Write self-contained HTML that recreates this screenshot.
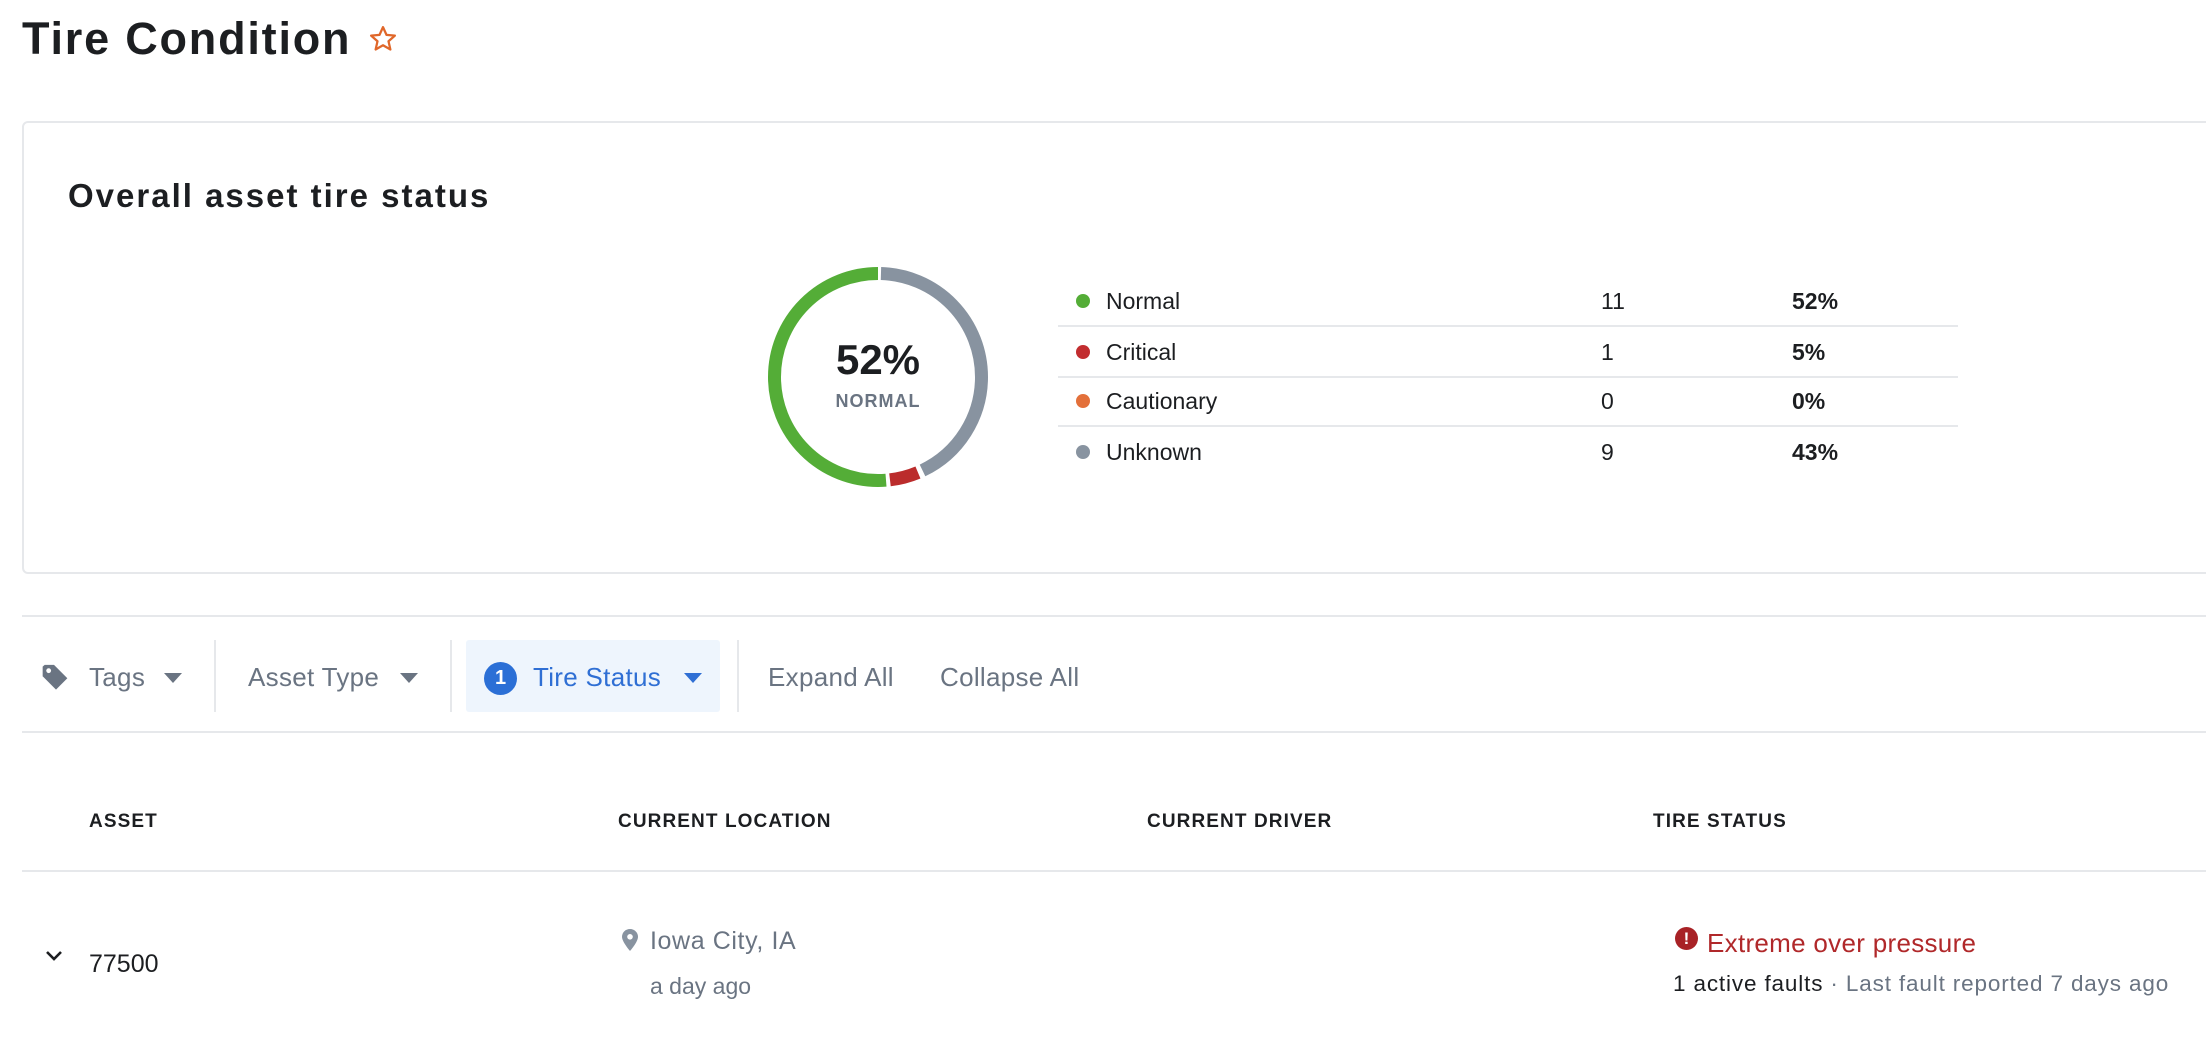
<!DOCTYPE html>
<html><head><meta charset="utf-8"><style>
*{margin:0;padding:0;box-sizing:border-box}
body{width:2206px;height:1044px;background:#fff;font-family:"Liberation Sans",sans-serif;color:#1c1e21;position:relative;overflow:hidden}
.a{position:absolute;white-space:nowrap}
.c{line-height:40px;height:40px;margin-top:-20px}
.line{position:absolute;height:2px;background:#e6e8eb}
.dot{position:absolute;width:14px;height:14px;border-radius:50%;margin-top:-7px}
.lg{font-size:23px}
.pc{font-weight:bold}
.filt{font-size:26px;color:#6a7482;letter-spacing:.3px}
.hd{font-size:19px;font-weight:bold;letter-spacing:1.1px;color:#1c1e21}
.car{position:absolute;width:0;height:0;border-left:9px solid transparent;border-right:9px solid transparent;border-top:10px solid #6a7482;margin-top:-4px}
</style></head><body>
<div class="a c" style="left:22px;top:39px;font-size:45px;font-weight:bold;line-height:40px;letter-spacing:1.8px">Tire Condition</div>
<svg class="a" style="left:368px;top:24px" width="30" height="30" viewBox="0 0 24 24"><path d="M12 2.5l2.8 6.2 6.7.6-5.1 4.5 1.5 6.6L12 17l-5.9 3.4 1.5-6.6-5.1-4.5 6.7-.6z" fill="none" stroke="#e0672a" stroke-width="1.8" stroke-linejoin="round"/></svg>

<div class="a" style="left:22px;top:121px;width:2300px;height:453px;border:2px solid #e6e8eb;border-radius:6px"></div>
<div class="a c" style="left:68px;top:196px;font-size:33px;font-weight:bold;letter-spacing:2px">Overall asset tire status</div>

<svg class="a" style="left:768px;top:267px" width="220" height="220" viewBox="0 0 220 220">
<g fill="none" stroke-width="13" transform="rotate(-90 110 110)">
<circle cx="110" cy="110" r="103.5" stroke="#8893a0" stroke-dasharray="276 1000" stroke-dashoffset="-3"/>
<circle cx="110" cy="110" r="103.5" stroke="#bb2c2c" stroke-dasharray="29 1000" stroke-dashoffset="-284"/>
<circle cx="110" cy="110" r="103.5" stroke="#54ad37" stroke-dasharray="336 1000" stroke-dashoffset="-317"/>
</g></svg>
<div class="a c" style="left:778px;width:200px;text-align:center;top:360px;font-size:42px;font-weight:bold">52%</div>
<div class="a c" style="left:778px;width:200px;text-align:center;top:401px;font-size:18px;font-weight:bold;color:#6a7482;letter-spacing:1px">NORMAL</div>

<div class="line" style="left:1058px;width:900px;top:325px"></div>
<div class="line" style="left:1058px;width:900px;top:376px"></div>
<div class="line" style="left:1058px;width:900px;top:425px"></div>
<div class="dot" style="left:1076px;top:301px;background:#54ad37"></div>
<div class="dot" style="left:1076px;top:352px;background:#c22d2f"></div>
<div class="dot" style="left:1076px;top:401px;background:#e3703a"></div>
<div class="dot" style="left:1076px;top:452px;background:#8893a0"></div>
<div class="a c lg" style="left:1106px;top:301px">Normal</div>
<div class="a c lg" style="left:1106px;top:352px">Critical</div>
<div class="a c lg" style="left:1106px;top:401px">Cautionary</div>
<div class="a c lg" style="left:1106px;top:452px">Unknown</div>
<div class="a c lg" style="left:1601px;top:301px">11</div>
<div class="a c lg" style="left:1601px;top:352px">1</div>
<div class="a c lg" style="left:1601px;top:401px">0</div>
<div class="a c lg" style="left:1601px;top:452px">9</div>
<div class="a c lg pc" style="left:1792px;top:301px">52%</div>
<div class="a c lg pc" style="left:1792px;top:352px">5%</div>
<div class="a c lg pc" style="left:1792px;top:401px">0%</div>
<div class="a c lg pc" style="left:1792px;top:452px">43%</div>

<div class="line" style="left:22px;width:2200px;top:615px"></div>
<svg class="a" style="left:40px;top:662px" width="32" height="32" viewBox="0 0 24 24"><path d="M2 3.5v7.2l10 10 8.5-8.5-10-10H3.5z" fill="#6a7482"/><circle cx="6.5" cy="6.5" r="1.8" fill="#fff"/></svg>
<div class="a c filt" style="left:89px;top:677px">Tags</div>
<div class="car" style="left:164px;top:677px"></div>
<div class="a" style="left:214px;top:640px;width:2px;height:72px;background:#e6e8eb"></div>
<div class="a c filt" style="left:248px;top:677px">Asset Type</div>
<div class="car" style="left:400px;top:677px"></div>
<div class="a" style="left:450px;top:640px;width:2px;height:72px;background:#e6e8eb"></div>
<div class="a" style="left:466px;top:640px;width:254px;height:72px;background:#eef5fd;border-radius:3px"></div>
<div class="a" style="left:484px;top:662px;width:33px;height:33px;border-radius:50%;background:#2b6fd6;color:#fff;font-size:20px;font-weight:bold;text-align:center;line-height:33px">1</div>
<div class="a c filt" style="left:533px;top:677px;color:#2f6fd4">Tire Status</div>
<div class="car" style="left:684px;top:677px;border-top-color:#2f6fd4"></div>
<div class="a" style="left:737px;top:640px;width:2px;height:72px;background:#e6e8eb"></div>
<div class="a c filt" style="left:768px;top:677px">Expand All</div>
<div class="a c filt" style="left:940px;top:677px">Collapse All</div>
<div class="line" style="left:22px;width:2200px;top:731px"></div>

<div class="a c hd" style="left:89px;top:822px">ASSET</div>
<div class="a c hd" style="left:618px;top:822px">CURRENT LOCATION</div>
<div class="a c hd" style="left:1147px;top:822px">CURRENT DRIVER</div>
<div class="a c hd" style="left:1653px;top:822px">TIRE STATUS</div>
<div class="line" style="left:22px;width:2200px;top:870px"></div>

<svg class="a" style="left:44px;top:948px" width="20" height="16" viewBox="0 0 20 16"><path d="M3 4l7 7 7-7" fill="none" stroke="#1c1e21" stroke-width="2.6"/></svg>
<div class="a c" style="left:89px;top:964px;font-size:25px">77500</div>
<svg class="a" style="left:622px;top:929px" width="16" height="22" viewBox="0 0 16 22"><path d="M8 0C3.6 0 0 3.4 0 7.8 0 13 8 22 8 22s8-9 8-14.2C16 3.4 12.4 0 8 0z" fill="#8893a0"/><circle cx="8" cy="7.8" r="2.8" fill="#fff"/></svg>
<div class="a c" style="left:650px;top:941px;font-size:25px;letter-spacing:.6px;color:#6a7482">Iowa City, IA</div>
<div class="a c" style="left:650px;top:986px;font-size:23px;color:#6a7482">a day ago</div>
<div class="a" style="left:1675px;top:927px;width:23px;height:23px;border-radius:50%;background:#a82226;color:#fff;font-size:17px;font-weight:bold;text-align:center;line-height:23px">!</div>
<div class="a c" style="left:1707px;top:943px;font-size:26px;letter-spacing:.3px;color:#b0282a">Extreme over pressure</div>
<div class="a c" style="left:1673px;top:984px;font-size:22.5px;letter-spacing:.85px;color:#1c1e21">1 active faults <span style="color:#6a7482">· Last fault reported 7 days ago</span></div>
</body></html>
